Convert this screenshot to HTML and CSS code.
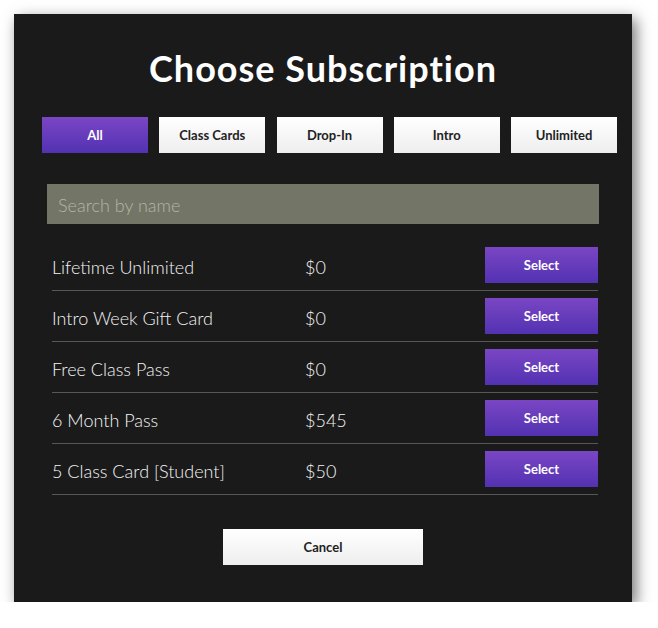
FILE: index.html
```html
<!DOCTYPE html>
<html>
<head>
<meta charset="utf-8">
<link rel="stylesheet" href="styles.css">
</head>
<body>
<div class="panel">
  <h1 class="title">Choose Subscription</h1>
  <div class="filters">
    <button class="filter active">All</button>
    <button class="filter">Class Cards</button>
    <button class="filter">Drop-In</button>
    <button class="filter">Intro</button>
    <button class="filter">Unlimited</button>
  </div>
  <input class="search" type="text" placeholder="Search by name">
  <div class="list">
    <div class="row"><span class="name">Lifetime Unlimited</span><span class="price">$0</span><button class="select">Select</button></div>
    <div class="row"><span class="name">Intro Week Gift Card</span><span class="price">$0</span><button class="select">Select</button></div>
    <div class="row"><span class="name">Free Class Pass</span><span class="price">$0</span><button class="select">Select</button></div>
    <div class="row"><span class="name">6 Month Pass</span><span class="price">$545</span><button class="select">Select</button></div>
    <div class="row"><span class="name">5 Class Card [Student]</span><span class="price">$50</span><button class="select">Select</button></div>
  </div>
  <div class="actions"><button class="cancel">Cancel</button></div>
</div>
</body>
</html>
```

FILE: styles.css
```css
html, body {
  margin: 0;
  padding: 0;
  background: #ffffff;
}
body {
  font-family: "Lato", "Liberation Sans", sans-serif;
}
.panel {
  margin: 14px 0 0 14px;
  width: 618px;
  height: 588px;
  box-sizing: border-box;
  background: #1a1a1a;
  box-shadow: 4px 5px 14px rgba(0, 0, 0, 0.55);
  padding-top: 32px;
  display: flex;
  flex-direction: column;
}
.title {
  margin: 0;
  text-align: center;
  color: #ffffff;
  font-size: 36px;
  line-height: 44px;
  font-weight: 700;
  letter-spacing: 1px;
}
.filters {
  display: flex;
  gap: 11.25px;
  margin: 27px 0 0 28px;
}
.filter {
  width: 106px;
  height: 36px;
  border: 0;
  padding: 0;
  font-family: inherit;
  font-size: 13px;
  font-weight: 700;
  color: #222222;
  background: linear-gradient(to bottom, #ffffff, #eeeeee);
}
.filter.active {
  color: #ffffff;
  background: linear-gradient(to bottom, #7a46c4, #5232b2);
}
.search {
  display: block;
  margin: 31px 33px 0 33px;
  height: 40px;
  box-sizing: border-box;
  border: 0;
  outline: none;
  padding: 2px 11px 0 11px;
  background: #737566;
  font-family: inherit;
  font-size: 18px;
  font-weight: 300;
  color: #eeeeee;
}
.search::placeholder {
  color: #b4b5a8;
}
.list {
  margin: 16px 34px 0 38px;
}
.row {
  display: flex;
  align-items: center;
  height: 50px;
  border-bottom: 1px solid #575757;
  color: #f4f4f4;
  font-size: 18px;
  font-weight: 300;
}
.name {
  width: 253px;
  padding-top: 3px;
}
.price {
  flex: 1;
  padding-top: 3px;
}
.select {
  width: 113px;
  height: 36px;
  border: 0;
  padding: 0;
  font-family: inherit;
  font-size: 13px;
  font-weight: 700;
  color: #ffffff;
  background: linear-gradient(to bottom, #7a46c4, #5232b2);
}
.actions {
  display: flex;
  justify-content: center;
  margin-top: 34px;
}
.cancel {
  width: 200px;
  height: 36px;
  border: 0;
  padding: 0;
  font-family: inherit;
  font-size: 13px;
  font-weight: 700;
  color: #222222;
  background: linear-gradient(to bottom, #ffffff, #eeeeee);
}
```
